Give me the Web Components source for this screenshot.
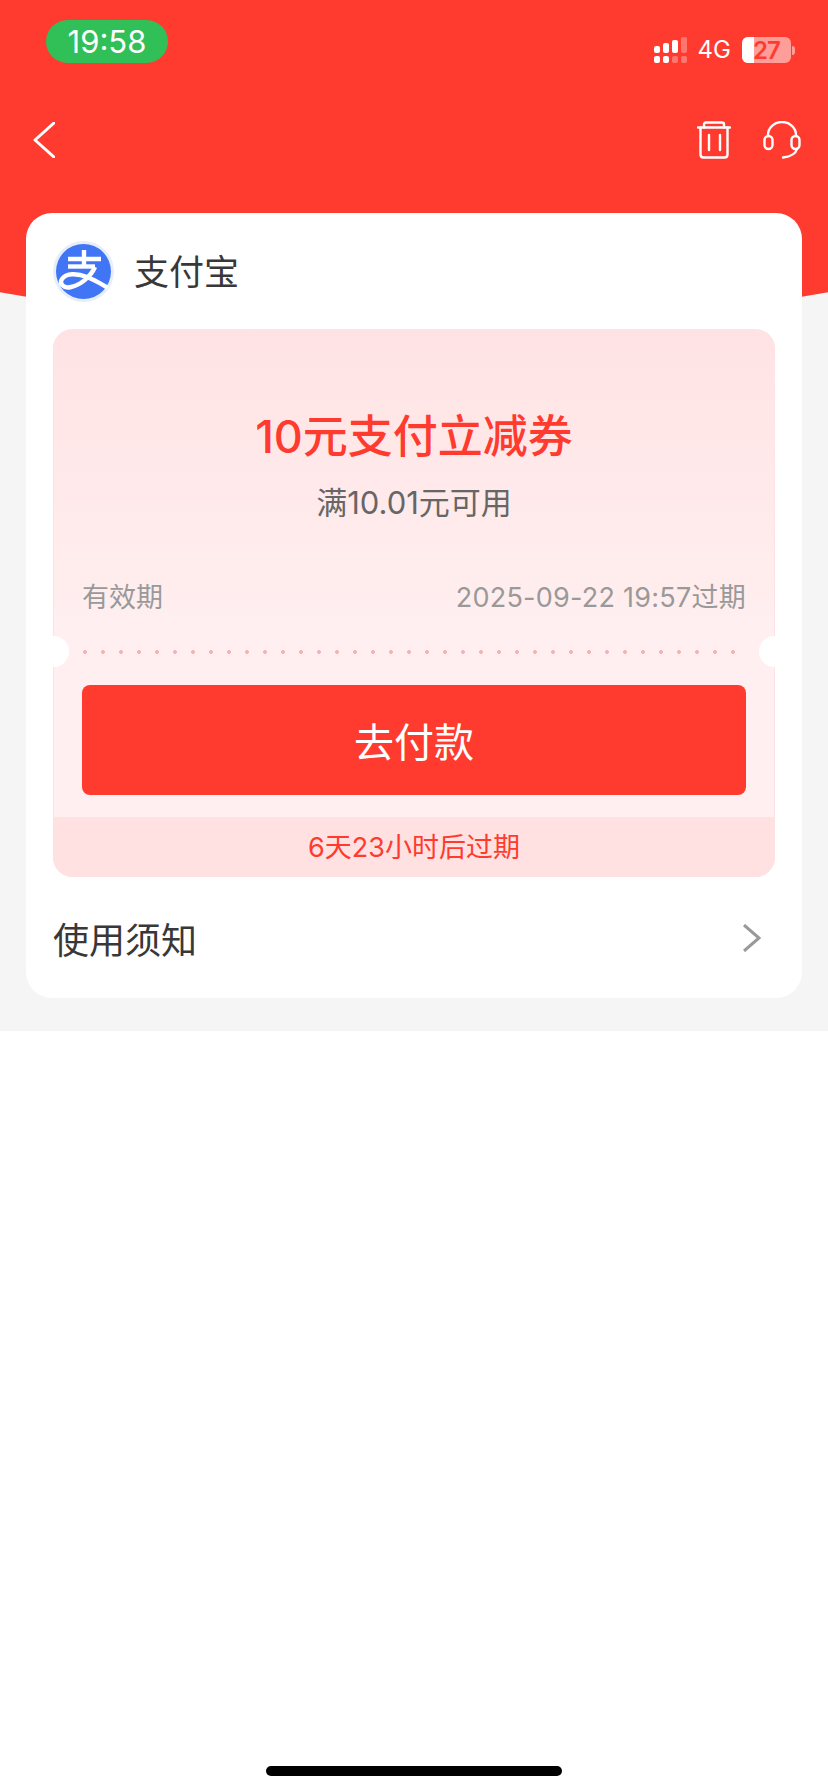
<!DOCTYPE html>
<html lang="zh">
<head>
<meta charset="utf-8">
<title>券详情</title>
<style>
html, body { margin: 0; padding: 0; background: #fff; }
body { font-family: Inter, "Noto Sans CJK SC", sans-serif; }
</style>
</head>
<body>
<coupon-page>
  <status-bar slot="top"></status-bar>
  <nav-bar slot="top"></nav-bar>
  <coupon-card>
    <coupon-ticket></coupon-ticket>
  </coupon-card>
</coupon-page>

<script>
const FONT = 'Inter, "Noto Sans CJK SC", sans-serif';

class CouponPage extends HTMLElement {
  connectedCallback() {
    const root = this.attachShadow({ mode: "open" });
    root.innerHTML = `
<style>
:host { display: flex; flex-direction: column; height: 1792px; overflow: hidden; background: #fff; font-family: ${FONT}; }
.main { position: relative; background: #f5f5f5; height: 1031px; display: flex; flex-direction: column; }
.hero { position: absolute; left: 0; top: 0; right: 0; height: 340px; background: #ff3b30; clip-path: circle(2351px at 50% -2022px); }
.content { position: relative; display: flex; flex-direction: column; }
.rest { flex: 1; display: flex; flex-direction: column; justify-content: flex-end; align-items: center; padding-bottom: 16px; }
.home { width: 296px; height: 10px; border-radius: 5px; background: #000; }
</style>
<div class="main">
  <div class="hero"></div>
  <div class="content">
    <slot name="top"></slot>
    <slot></slot>
  </div>
</div>
<div class="rest"><div class="home"></div></div>`;
  }
}

class StatusBar extends HTMLElement {
  connectedCallback() {
    const root = this.attachShadow({ mode: "open" });
    root.innerHTML = `
<style>
:host { display: flex; justify-content: space-between; align-items: flex-start; height: 83px; padding: 20px 33px 0 46px; box-sizing: border-box; color: #fff; }
.time { width: 122px; height: 43px; border-radius: 22px; background: #31bf57; display: flex; align-items: center; justify-content: center; font-size: 31px; }
.right { display: flex; align-items: center; gap: 11px; margin-top: 16px; }
.net { font-size: 24px; line-height: 28px; }
.batt { position: relative; width: 49px; height: 26px; border-radius: 6px; overflow: hidden; background: rgba(255,255,255,.5); display: flex; align-items: center; justify-content: center; font-size: 24px; font-weight: 600; letter-spacing: -1px; color: #ff3b30; }
.batt i { position: absolute; left: 0; top: 0; bottom: 0; width: 12px; background: #fff; }
.batt span { position: relative; }
.power { display: flex; align-items: center; }
.tip { width: 3px; height: 9px; margin-left: 1px; border-radius: 0 4px 4px 0; background: rgba(255,255,255,.5); }
</style>
<div class="time">19:58</div>
<div class="right">
  <svg width="33" height="26" viewBox="0 0 33 26" fill="#fff">
    <rect x="0" y="9" width="6" height="7" rx="2"/>
    <rect x="9" y="6" width="6" height="10" rx="2"/>
    <rect x="18" y="3" width="6" height="13" rx="2"/>
    <rect x="27" y="0" width="6" height="16" rx="2" opacity=".3"/>
    <rect x="0" y="19" width="6" height="7" rx="2"/>
    <rect x="9" y="19" width="6" height="7" rx="2"/>
    <rect x="18" y="19" width="6" height="7" rx="2" opacity=".3"/>
    <rect x="27" y="19" width="6" height="7" rx="2" opacity=".3"/>
  </svg>
  <span class="net">4G</span>
  <div class="power">
    <div class="batt"><i></i><span>27</span></div>
    <div class="tip"></div>
  </div>
</div>`;
  }
}

class NavBar extends HTMLElement {
  connectedCallback() {
    const root = this.attachShadow({ mode: "open" });
    root.innerHTML = `
<style>
:host { display: flex; justify-content: space-between; align-items: center; height: 130px; padding: 0 27px 17px 33px; box-sizing: border-box; }
.actions { display: flex; align-items: center; gap: 32px; }
svg { display: block; fill: none; stroke: #fff; stroke-linecap: round; stroke-linejoin: round; }
</style>
<svg width="22" height="36" viewBox="0 0 22 36" stroke-width="3"><path d="M21 1 L2 18 L21 35"/></svg>
<div class="actions">
  <svg width="34" height="38" viewBox="0 0 34 38" stroke-width="2.4">
    <path d="M1 6.5 H33"/><path d="M7 6.5 V3.5 Q7 1.5 9 1.5 H25 Q27 1.5 27 3.5 V6.5"/>
    <path d="M3.5 6.5 V33.5 Q3.5 36.5 6.5 36.5 H27.5 Q30.5 36.5 30.5 33.5 V6.5"/>
    <path d="M12 14 V29"/><path d="M23 14 V29"/>
  </svg>
  <svg width="38" height="38" viewBox="0 0 38 38" stroke-width="2.4">
    <path d="M5 15 V14 A14 13 0 0 1 33 14 V15"/>
    <rect x="1.5" y="15" width="8" height="13" rx="4"/>
    <rect x="28.5" y="15" width="8" height="13" rx="4"/>
    <path d="M34 28 Q32 35 20 36.5"/>
  </svg>
</div>`;
  }
}

class CouponCard extends HTMLElement {
  connectedCallback() {
    const root = this.attachShadow({ mode: "open" });
    root.innerHTML = `
<style>
:host { display: flex; flex-direction: column; margin: 0 26px; background: #fff; border-radius: 26px; padding: 0 27px; color: #383838; }
.brand { display: flex; align-items: center; gap: 20px; height: 116px; font-size: 35px; }
.brand span { padding-bottom: 4px; }
.logo { display: block; }
.notice { display: flex; justify-content: space-between; align-items: center; height: 121px; font-size: 36px; }
.chev { display: block; margin-right: 14px; fill: none; stroke: #999; stroke-width: 3; }
</style>
<div class="brand">
  <svg class="logo" width="61" height="61" viewBox="0 0 61 61">
    <circle cx="30.5" cy="30.5" r="30.5" fill="#e8eef8"/>
    <circle cx="30.5" cy="30.5" r="27.5" fill="#4076f6"/>
    <g fill="none" stroke="#fff" stroke-width="4.4">
      <path d="M15 18 H48"/>
      <path d="M31 9 V26"/>
      <path d="M15 25.5 H42"/>
      <path d="M42 26 C38 35 28 44 18 46 C10 48 6 42 9 38 C13 32 24 32 34 36 C42 39 48 43 55 47"/>
    </g>
  </svg>
  <span>支付宝</span>
</div>
<slot></slot>
<div class="notice">
  <span>使用须知</span>
  <svg class="chev" width="18" height="28" viewBox="0 0 18 28"><path d="M1 1 L16 14 L1 27"/></svg>
</div>`;
  }
}

class CouponTicket extends HTMLElement {
  connectedCallback() {
    const root = this.attachShadow({ mode: "open" });
    root.innerHTML = `
<style>
:host { display: flex; flex-direction: column; height: 548px; border-radius: 20px; overflow: hidden; position: relative; background: linear-gradient(#ffe3e4, #ffeff0 55%); color: #999; box-shadow: inset 1px 0 #ffe3e4, inset -1px 0 #ffe3e4; }
.body { flex: 1; display: flex; flex-direction: column; align-items: center; padding: 0 29px; }
h2 { margin: 0; padding-top: 80px; font-size: 45px; line-height: 56px; font-weight: 500; color: #ff3b30; }
.min { font-size: 31px; line-height: 40px; margin-top: 18px; color: #666; }
.valid { align-self: stretch; display: flex; justify-content: space-between; font-size: 27px; line-height: 36px; margin-top: 57px; }
.date { letter-spacing: 0.25px; }
.dots { align-self: stretch; height: 4px; margin-top: 34px; background: radial-gradient(circle at 2px 2px, #f5b3b5 1.7px, transparent 2.2px) 1px 0 / 18px 4px repeat-x; }
button { align-self: stretch; height: 110px; margin-top: 31px; border: 0; border-radius: 8px; background: #ff3b30; color: #fff; font: inherit; font-size: 40px; padding: 0; }
.foot { height: 60px; padding-bottom: 3px; box-sizing: border-box; display: flex; align-items: center; justify-content: center; background: #ffe1e2; color: #ff3b30; font-size: 27px; }
.notch { position: absolute; top: 307px; width: 31px; height: 31px; border-radius: 50%; background: #fff; }
.notch.l { left: -15px; }
.notch.r { right: -15px; }
</style>
<div class="body">
  <h2>10元支付立减券</h2>
  <div class="min">满10.01元可用</div>
  <div class="valid"><span>有效期</span><span class="date">2025-09-22 19:57过期</span></div>
  <div class="dots"></div>
  <button>去付款</button>
</div>
<div class="foot">6天23小时后过期</div>
<div class="notch l"></div>
<div class="notch r"></div>`;
  }
}

customElements.define("coupon-page", CouponPage);
customElements.define("status-bar", StatusBar);
customElements.define("nav-bar", NavBar);
customElements.define("coupon-card", CouponCard);
customElements.define("coupon-ticket", CouponTicket);
</script>
</body>
</html>
